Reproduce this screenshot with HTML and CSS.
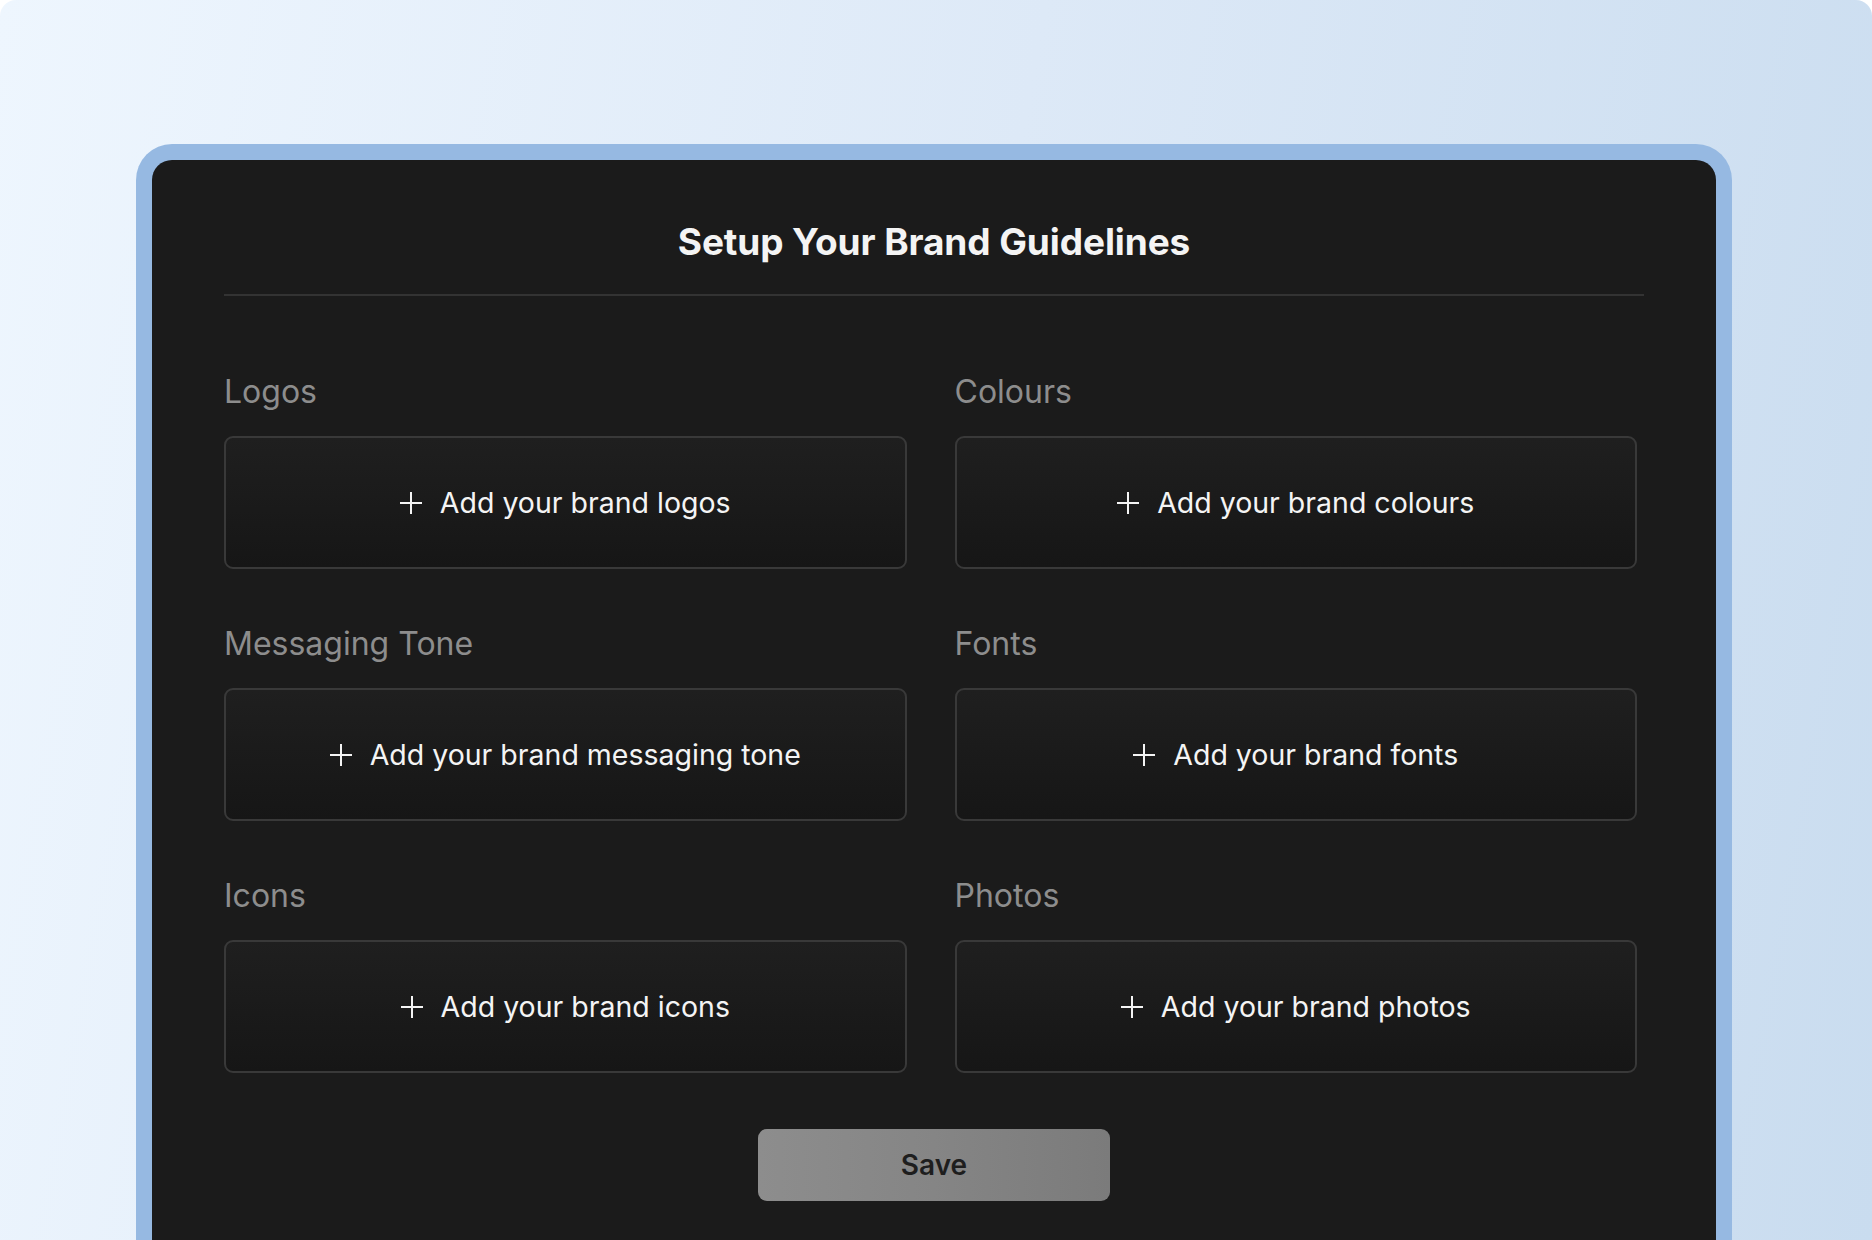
FILE: index.html
```html
<!DOCTYPE html>
<html lang="en">
<head>
<meta charset="utf-8">
<title>Setup Your Brand Guidelines</title>
<link rel="stylesheet" href="styles.css">
</head>
<body>
<div class="page">
  <div class="frame">
    <div class="panel">
      <h1 class="title">Setup Your Brand Guidelines</h1>
      <div class="divider"></div>
      <div class="grid">
        <section class="field">
          <div class="label">Logos</div>
          <button class="drop"><svg class="plus" viewBox="0 0 22 22"><path d="M11 0V22M0 11H22"/></svg><span>Add your brand logos</span></button>
        </section>
        <section class="field">
          <div class="label">Colours</div>
          <button class="drop"><svg class="plus" viewBox="0 0 22 22"><path d="M11 0V22M0 11H22"/></svg><span>Add your brand colours</span></button>
        </section>
        <section class="field">
          <div class="label">Messaging Tone</div>
          <button class="drop"><svg class="plus" viewBox="0 0 22 22"><path d="M11 0V22M0 11H22"/></svg><span>Add your brand messaging tone</span></button>
        </section>
        <section class="field">
          <div class="label">Fonts</div>
          <button class="drop"><svg class="plus" viewBox="0 0 22 22"><path d="M11 0V22M0 11H22"/></svg><span>Add your brand fonts</span></button>
        </section>
        <section class="field">
          <div class="label">Icons</div>
          <button class="drop"><svg class="plus" viewBox="0 0 22 22"><path d="M11 0V22M0 11H22"/></svg><span>Add your brand icons</span></button>
        </section>
        <section class="field">
          <div class="label">Photos</div>
          <button class="drop"><svg class="plus" viewBox="0 0 22 22"><path d="M11 0V22M0 11H22"/></svg><span>Add your brand photos</span></button>
        </section>
      </div>
      <div class="actions">
        <button class="save">Save</button>
      </div>
    </div>
  </div>
</div>
</body>
</html>
```

FILE: styles.css
```css
* { box-sizing: border-box; }
html, body { margin: 0; padding: 0; background: #ffffff; }
body { font-family: Inter, "Noto Sans", "Liberation Sans", sans-serif; }

.page {
  width: 1872px;
  height: 1240px;
  overflow: hidden;
  padding: 144px 0 0 136px;
  background: linear-gradient(100deg, #eef6fe 0%, #dde9f7 50%, #c9dcef 100%);
  border-radius: 16px 16px 0 0;
}

.frame {
  width: 1596px;
  height: 1096px;
  padding: 16px 16px 0 16px;
  background: #96b9e2;
  border-radius: 36px 36px 0 0;
}

.panel {
  height: 100%;
  background: #1b1b1b;
  border-radius: 20px 20px 0 0;
  padding: 58px 72px 0 72px;
}

.title {
  margin: 0;
  height: 48px;
  line-height: 48px;
  font-size: 37px;
  font-weight: 700;
  color: #f4f4f4;
  text-align: center;
  letter-spacing: -0.1px;
}

.divider {
  margin-top: 28px;
  height: 2px;
  background: #333333;
}

.grid {
  margin-top: 76px;
  margin-right: 7px;
  display: grid;
  grid-template-columns: 1fr 1fr;
  column-gap: 48px;
  row-gap: 55px;
}

.field {
  display: flex;
  flex-direction: column;
  gap: 24px;
}

.label {
  height: 40px;
  line-height: 40px;
  font-size: 32px;
  font-weight: 400;
  color: #8d8d8d;
}

.drop {
  height: 133px;
  width: 100%;
  display: flex;
  align-items: center;
  justify-content: center;
  gap: 18px;
  border: 2px solid #393939;
  border-radius: 9px;
  background: linear-gradient(180deg, #1f1f1f 0%, #161616 100%);
  color: #f4f4f4;
  font-family: inherit;
  font-size: 28.5px;
  font-weight: 400;
  cursor: pointer;
  padding: 0;
}

.plus {
  width: 22px;
  height: 22px;
  flex: none;
}
.plus path {
  stroke: #f4f4f4;
  stroke-width: 2;
  fill: none;
}

.actions {
  margin-top: 56px;
  display: flex;
  justify-content: center;
}

.save {
  width: 352px;
  height: 72px;
  border: none;
  border-radius: 9px;
  background: linear-gradient(90deg, #8d8d8d 0%, #858585 50%, #7b7b7b 100%);
  color: #1e1e1e;
  font-family: inherit;
  font-size: 28px;
  font-weight: 600;
  cursor: pointer;
}
```
